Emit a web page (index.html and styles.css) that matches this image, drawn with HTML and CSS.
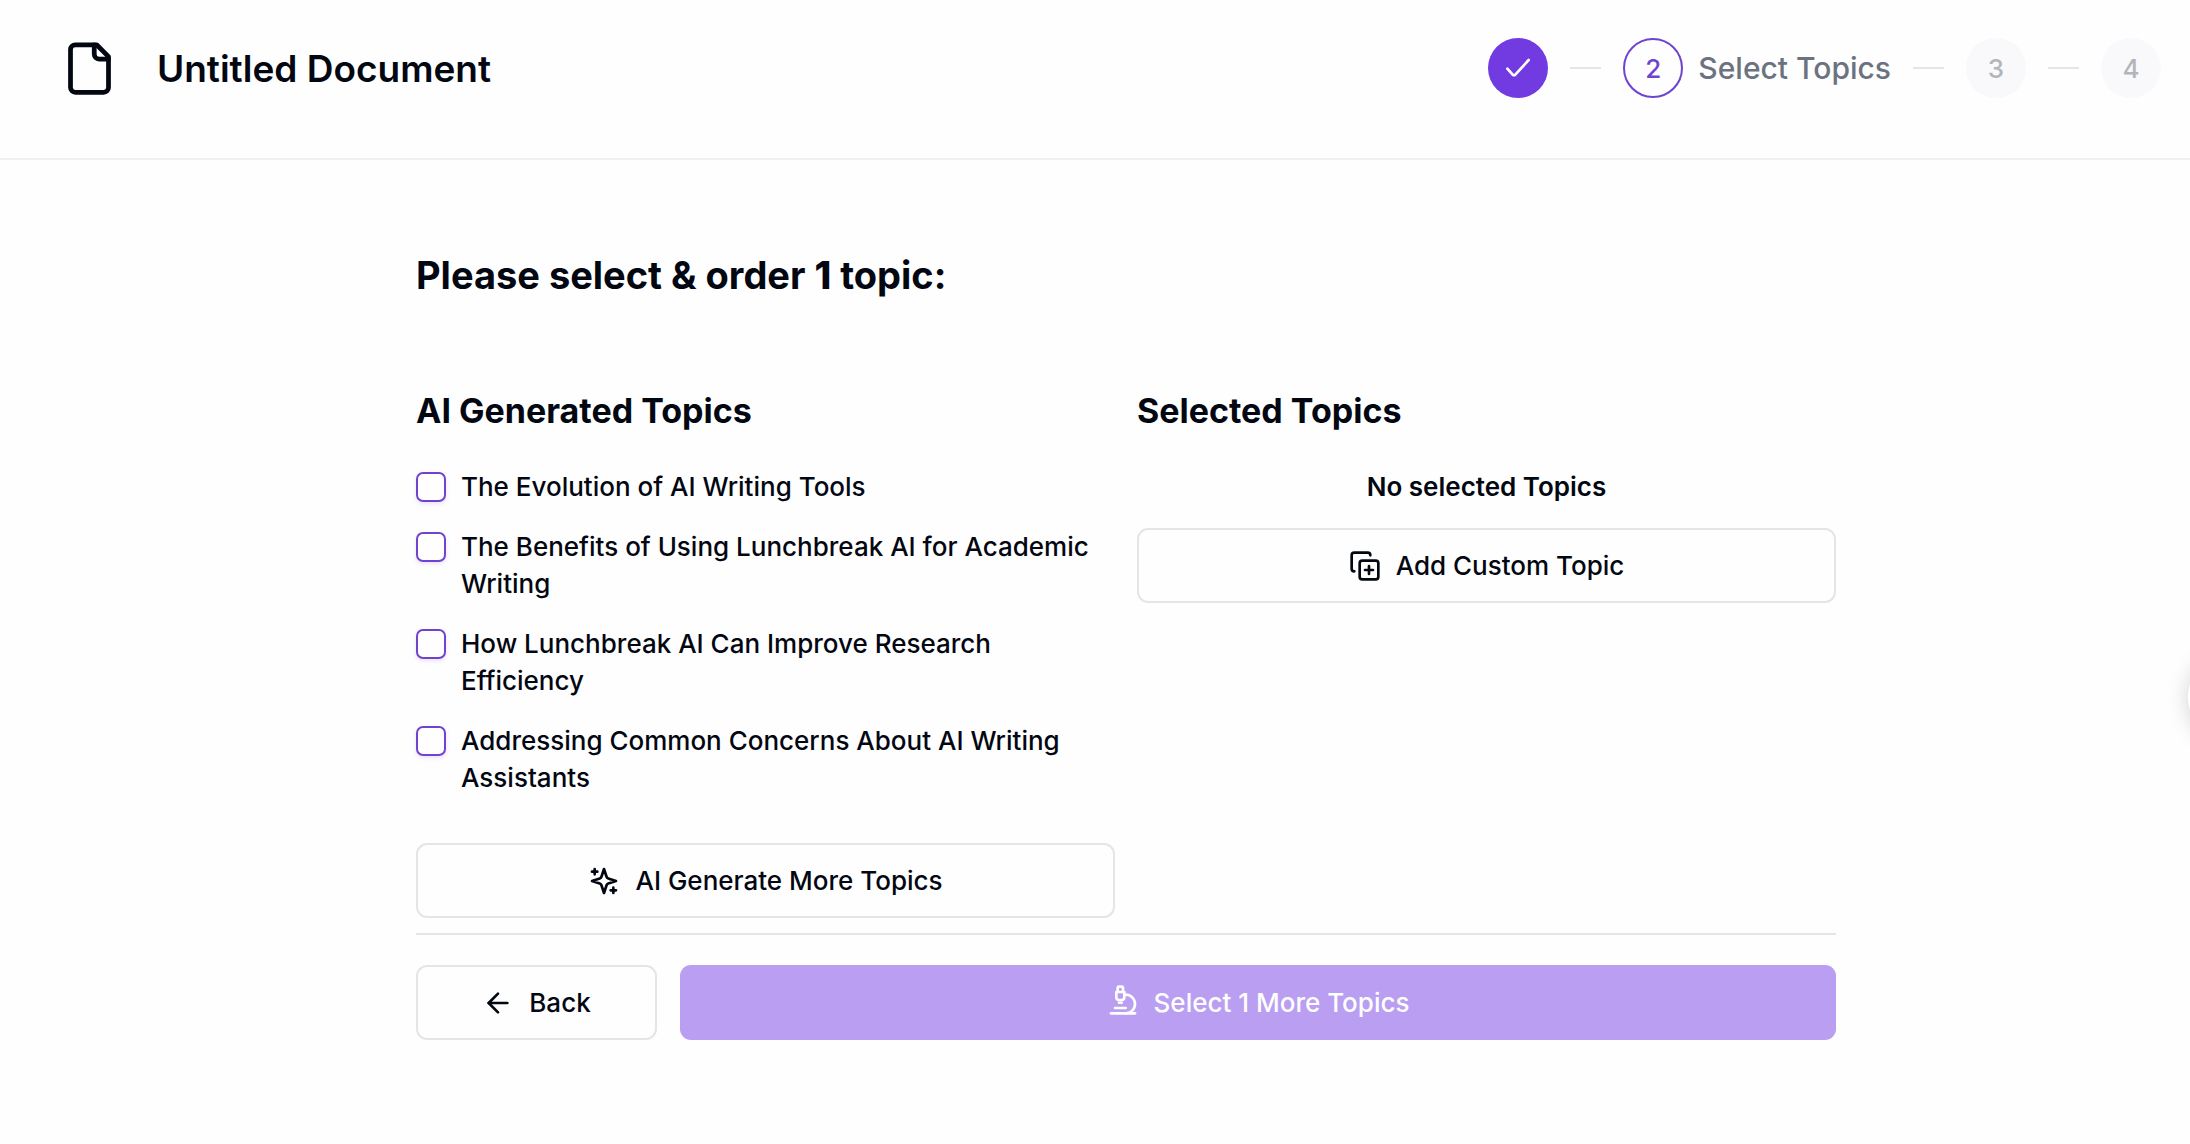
FILE: index.html
```html
<!DOCTYPE html>
<html lang="en">
<head>
    <meta charset="UTF-8">
    <meta name="viewport" content="width=device-width, initial-scale=1.0">
    <title>Untitled Document - Select Topics</title>
    <link rel="stylesheet" href="styles.css">
</head>
<body>
    <header class="header">
        <div class="doc-title">
            <svg class="doc-icon" viewBox="0 0 24 24"><path d="M15 2H6a2 2 0 0 0-2 2v16a2 2 0 0 0 2 2h12a2 2 0 0 0 2-2V7Z"/><path d="M14 2v4a2 2 0 0 0 2 2h4"/></svg>
            <span>Untitled Document</span>
        </div>

        <ol class="stepper">
            <li class="step">
                <span class="step-circle done">
                    <svg class="icon" viewBox="0 0 24 24"><path d="M20 6 10 17q-1 .8-2 0l-4-4.500"/></svg>
                </span>
            </li>
            <li class="step-line"></li>
            <li class="step">
                <span class="step-circle current">2</span>
                <span class="step-label">Select Topics</span>
            </li>
            <li class="step-line"></li>
            <li class="step"><span class="step-circle">3</span></li>
            <li class="step-line"></li>
            <li class="step"><span class="step-circle">4</span></li>
        </ol>
    </header>

    <main class="content">
        <h1>Please select &amp; order <strong>1</strong> topic:</h1>

        <div class="columns">
            <section>
                <h2>AI Generated Topics</h2>
                <div class="topics">
                    <label class="topic">
                        <input type="checkbox">
                        <span>The Evolution of AI Writing Tools</span>
                    </label>
                    <label class="topic">
                        <input type="checkbox">
                        <span>The Benefits of Using Lunchbreak AI for Academic Writing</span>
                    </label>
                    <label class="topic">
                        <input type="checkbox">
                        <span>How Lunchbreak AI Can Improve Research Efficiency</span>
                    </label>
                    <label class="topic">
                        <input type="checkbox">
                        <span>Addressing Common Concerns About AI Writing Assistants</span>
                    </label>
                </div>
                <button type="button" class="btn">
                    <svg class="icon" viewBox="0 0 24 24"><path d="m12 3-1.912 5.813a2 2 0 0 1-1.275 1.275L3 12l5.813 1.912a2 2 0 0 1 1.275 1.275L12 21l1.912-5.813a2 2 0 0 1 1.275-1.275L21 12l-5.813-1.912a2 2 0 0 1-1.275-1.275L12 3Z"/><path d="M5 3v4M19 17v4M3 5h4M17 19h4"/></svg>
                    AI Generate More Topics
                </button>
            </section>

            <section>
                <h2>Selected Topics</h2>
                <p class="empty">No selected Topics</p>
                <button type="button" class="btn">
                    <svg class="icon" viewBox="0 0 24 24"><path d="M15 12v6M12 15h6"/><rect width="14" height="14" x="8" y="8" rx="2"/><path d="M4 16c-1.100 0-2-.9-2-2V4c0-1.100.9-2 2-2h10c1.100 0 2 .9 2 2"/></svg>
                    Add Custom Topic
                </button>
            </section>
        </div>

        <div class="actions">
            <button type="button" class="btn btn-back">
                <svg class="icon" viewBox="0 0 24 24"><path d="m12 19-7-7 7-7"/><path d="M19 12H5"/></svg>
                Back
            </button>
            <button type="button" class="btn btn-primary" disabled>
                <svg class="icon" viewBox="0 0 24 24"><path d="M6 18h8"/><path d="M3 22h18"/><path d="M14 22a7 7 0 1 0 0-14h-1"/><path d="M9 14h2"/><path d="M9 12a2 2 0 0 1-2-2V6h6v4a2 2 0 0 1-2 2Z"/><path d="M12 6V3a1 1 0 0 0-1-1H9a1 1 0 0 0-1 1v3"/></svg>
                Select 1 More Topics
            </button>
        </div>
    </main>

    <!-- Floating help bubble, tucked behind the right edge -->
    <button type="button" class="bubble" aria-label="Help"></button>
</body>
</html>
```

FILE: styles.css
```css
* {
    margin: 0;
    padding: 0;
    box-sizing: border-box;
}

body {
    background-color: #fefefe;
    color: #030712;
    font-family: Inter, 'Liberation Sans', sans-serif;
    font-size: 26px;
    font-weight: 500;
    line-height: 37px;
    overflow-x: hidden;
}

svg {
    fill: none;
    stroke: currentColor;
    stroke-width: 2;
    stroke-linecap: round;
    stroke-linejoin: round;
    flex-shrink: 0;
}

.icon {
    width: 32px;
    height: 32px;
}

/* Header */
.header {
    display: flex;
    justify-content: space-between;
    align-items: center;
    padding: 38px 29px 60px 61px;
    border-bottom: 2px solid #f0f0f2;
}

.doc-title {
    display: flex;
    align-items: center;
    gap: 39px;
    font-size: 37px;
    font-weight: 600;
}

.doc-icon {
    width: 57px;
    height: 57px;
}

.stepper {
    display: flex;
    align-items: center;
    gap: 22px;
    list-style: none;
}

.step {
    display: flex;
    align-items: center;
    gap: 15px;
}

.step-circle {
    display: flex;
    justify-content: center;
    align-items: center;
    width: 60px;
    height: 60px;
    border-radius: 50%;
    background-color: #f9f9fb;
    color: #b4b5ba;
}

.step-circle.done {
    background-color: #713be1;
    color: white;
}

.step-circle.current {
    background-color: transparent;
    border: 2px solid #6f43cf;
    color: #6f43cf;
}

.step-label {
    font-size: 30px;
    color: #6b7280;
}

.step-line {
    width: 31px;
    height: 2px;
    background-color: #e5e5e8;
}

/* Content */
.content {
    max-width: 1482px;
    margin: 0 auto;
    padding: 95px 0 60px 62px;
}

h1 {
    font-size: 38px;
    font-weight: 700;
    line-height: 40px;
    margin-bottom: 97px;
}

h1 strong {
    font-weight: 800;
}

h2 {
    font-size: 34px;
    font-weight: 700;
    line-height: 38px;
    margin-bottom: 38px;
}

.columns {
    display: grid;
    grid-template-columns: 1fr 1fr;
    gap: 22px;
    padding-bottom: 15px;
    border-bottom: 2px solid #e5e5e8;
}

.topics {
    display: flex;
    flex-direction: column;
    gap: 23px;
    margin-bottom: 47px;
}

.topic {
    display: flex;
    align-items: flex-start;
    gap: 15px;
}

.topic input {
    appearance: none;
    flex-shrink: 0;
    width: 30px;
    height: 30px;
    margin-top: 4px;
    border: 2px solid #6f43cf;
    border-radius: 7px;
    box-shadow: 0 2px 4px rgba(111, 67, 207, 0.15);
}

.topic input:checked {
    background-color: #713be1;
}

.empty {
    font-weight: 600;
    text-align: center;
    margin-bottom: 23px;
}

.btn {
    display: flex;
    justify-content: center;
    align-items: center;
    gap: 15px;
    width: 100%;
    height: 75px;
    border: 2px solid #e5e5e8;
    border-radius: 11px;
    background-color: transparent;
    color: inherit;
    font: inherit;
    cursor: pointer;
}

.actions {
    display: flex;
    gap: 23px;
    padding-top: 30px;
}

.btn-back {
    width: 241px;
}

.btn-primary {
    flex: 1;
    border: none;
    background-color: #b99ef1;
    color: #fefefe;
}

.btn-primary .icon {
    margin-bottom: 6px;
}

.bubble {
    position: fixed;
    top: 652px;
    right: -88px;
    width: 90px;
    height: 90px;
    border: none;
    border-radius: 50%;
    background-color: white;
    box-shadow: 0 2px 22px rgba(0, 0, 0, 0.18);
}
```
